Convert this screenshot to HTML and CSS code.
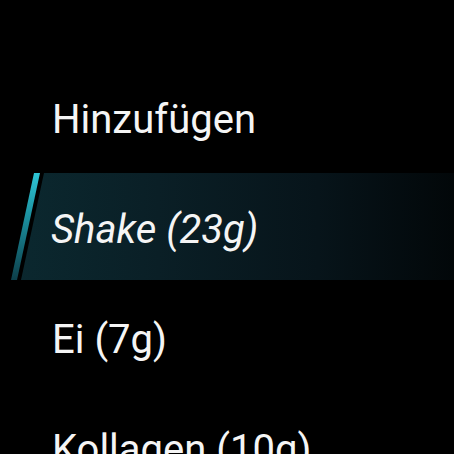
FILE: index.html
```html
<!DOCTYPE html>
<html>
<head>
<meta charset="utf-8">
<link rel="stylesheet" href="styles.css">
</head>
<body>
<div class="menu">
  <div class="item">Hinzufügen</div>
  <div class="item selected"><span class="label">Shake (23g)</span></div>
  <div class="item">Ei (7g)</div>
  <div class="item">Kollagen (10g)</div>
</div>
</body>
</html>
```
FILE: styles.css
```css
html, body {
  margin: 0;
  padding: 0;
  background: #000;
  width: 454px;
  height: 454px;
  overflow: hidden;
}
.menu {
  display: flex;
  flex-direction: column;
  padding-top: 65px;
}
.item {
  height: 110px;
  line-height: 110px;
  padding-left: 52px;
  font-family: Roboto, "Noto Sans", sans-serif;
  font-size: 40px;
  color: #f5f5f5;
  white-space: nowrap;
  position: relative;
}
.item.selected {
  font-style: italic;
}
.item.selected .label {
  position: relative;
  z-index: 1;
  margin-left: -1px;
}
.item.selected::before {
  content: "";
  position: absolute;
  top: -2px;
  height: 107px;
  left: 0;
  right: 0;
  background: linear-gradient(90deg, #0b2930 0%, #0a1f26 35%, #07141a 70%, #020709 100%);
  clip-path: polygon(44px 0, 100% 0, 100% 100%, 21px 100%);
}
.item.selected::after {
  content: "";
  position: absolute;
  top: -2px;
  height: 107px;
  left: 0;
  width: 44px;
  background: linear-gradient(180deg, #2ec6d6 0%, #1a8a99 45%, #0d3f4a 100%);
  clip-path: polygon(34px 0, 40px 0, 17px 100%, 11px 100%);
}
```
